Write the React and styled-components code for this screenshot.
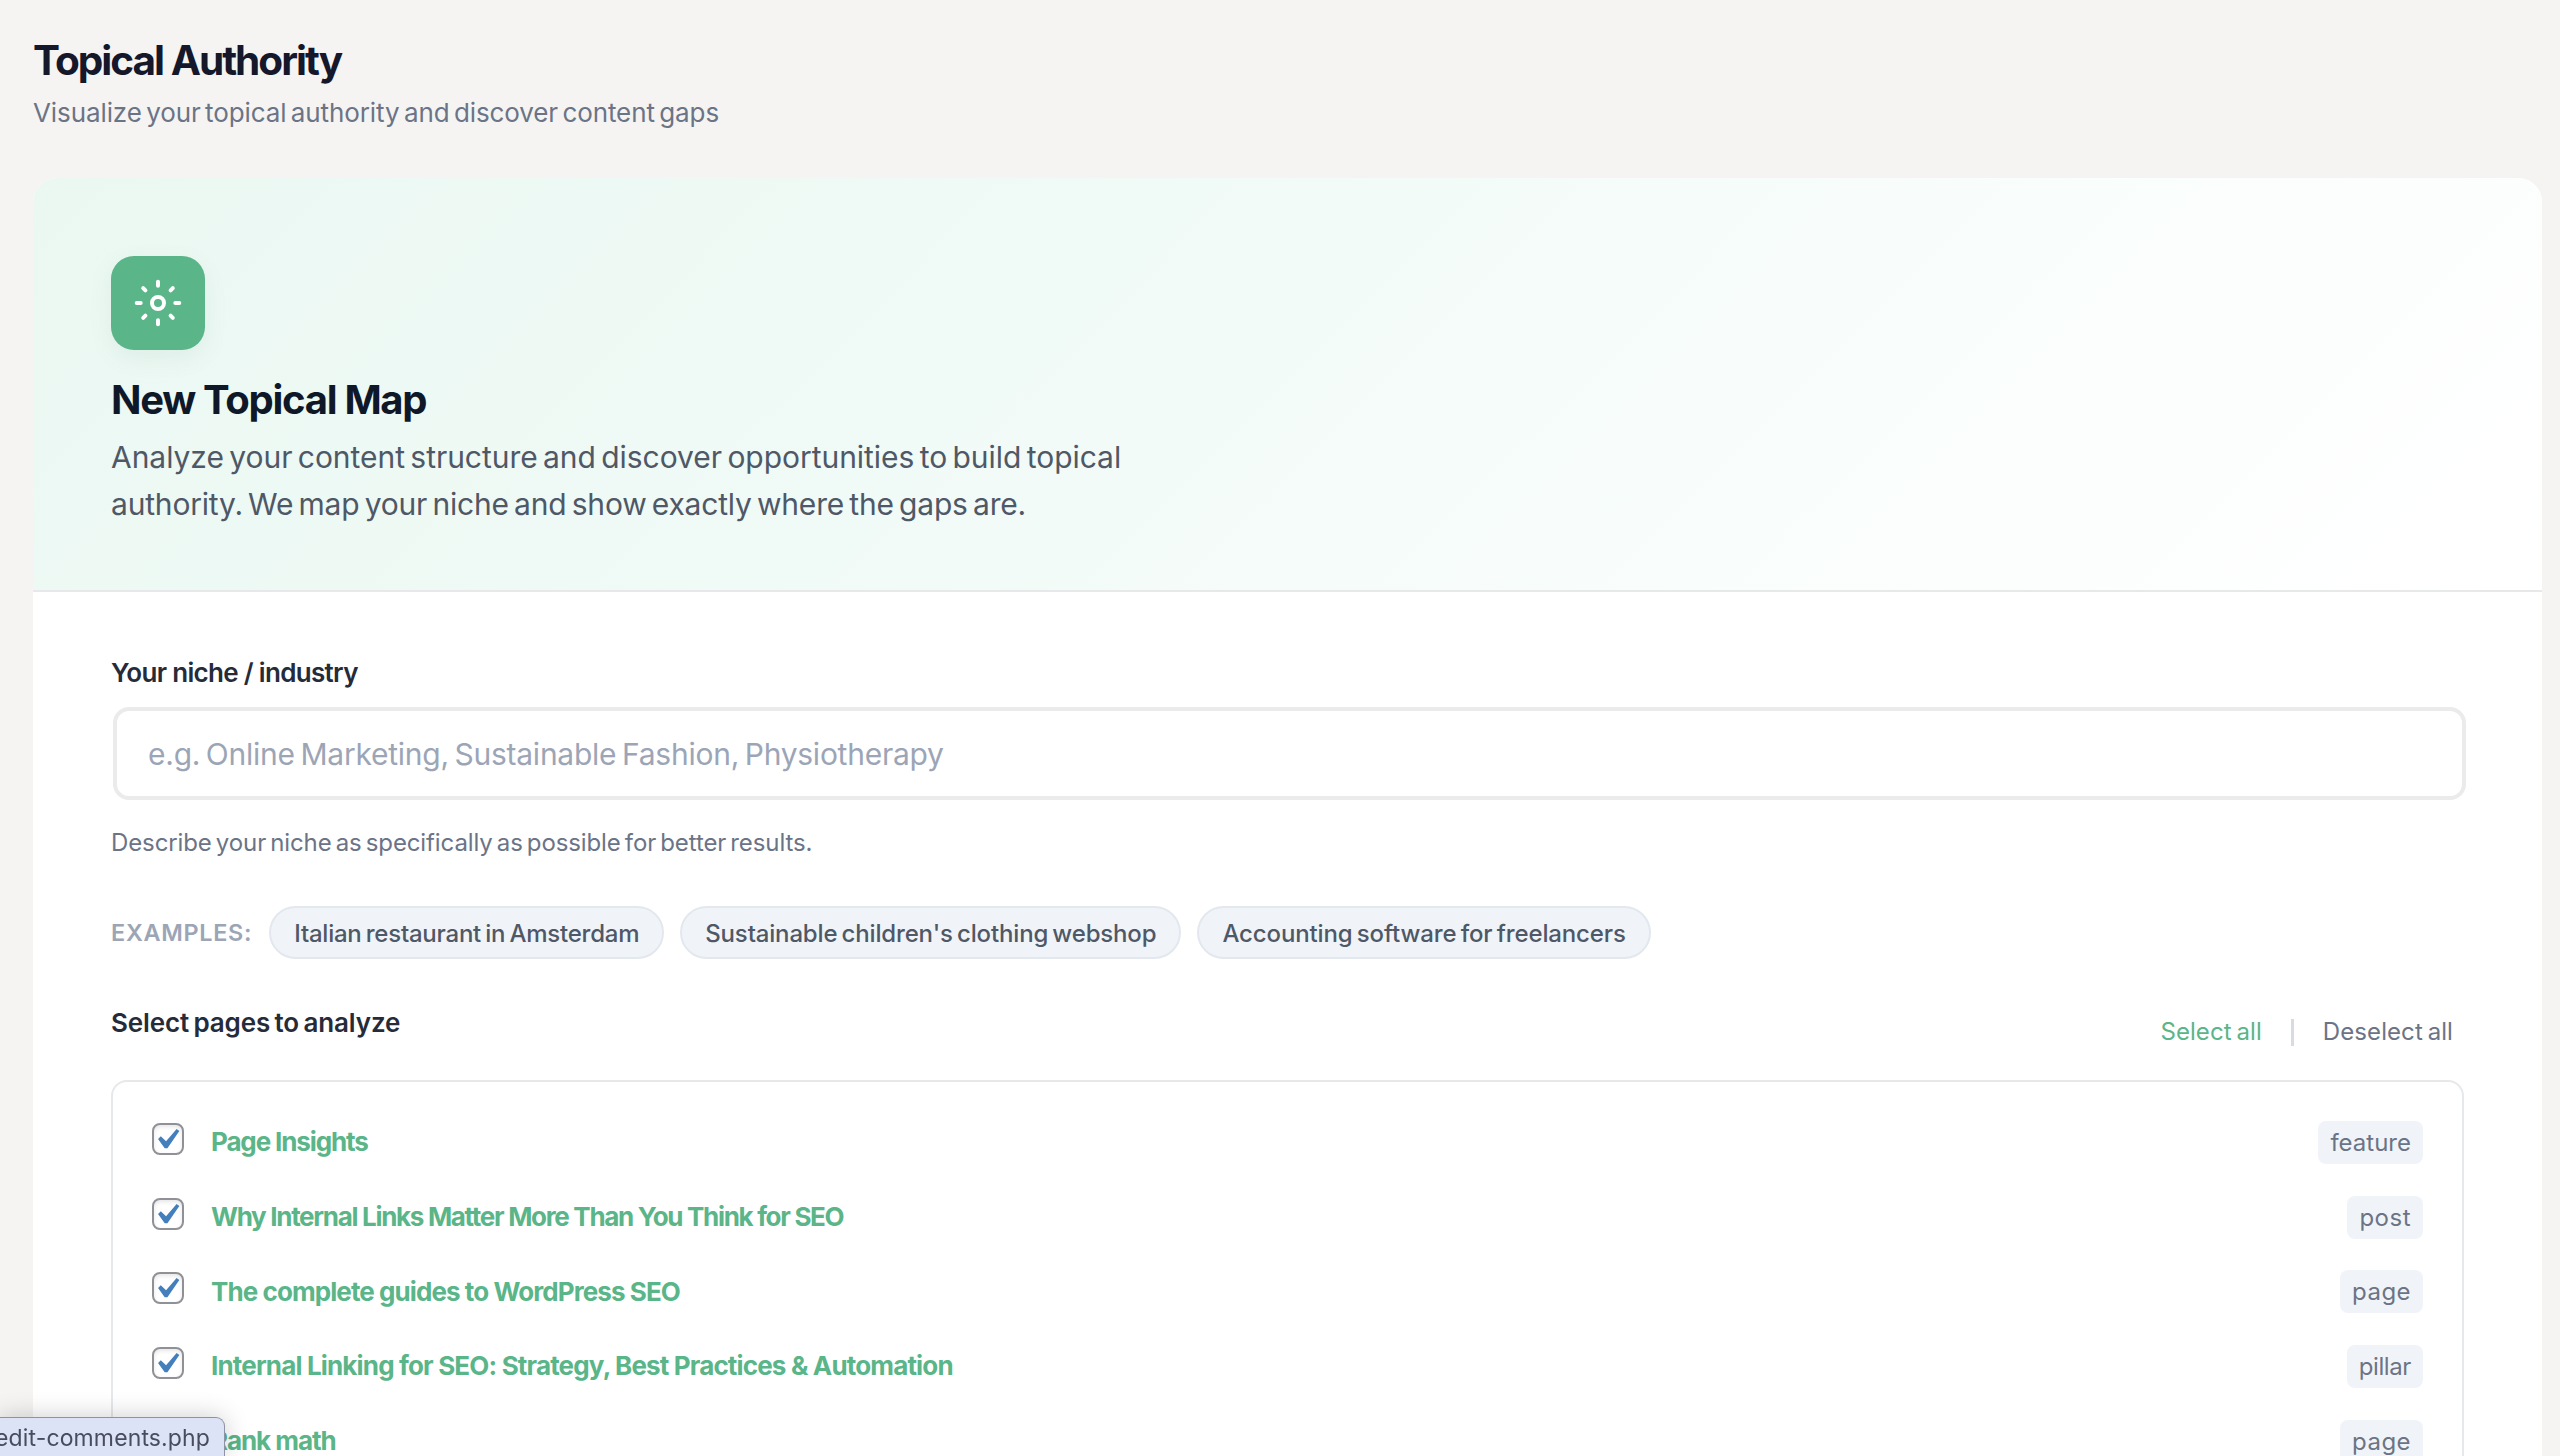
import React, {useState} from 'react'
import styled, {createGlobalStyle, css} from 'styled-components'

const color = {
    background: '#f5f4f2',
    white: '#ffffff',
    green: '#5ab588',
    heading: '#15172a',
    dark: '#262b3a',
    text: '#4f5866',
    secondary: '#6b7486',
    light: '#9ca5b6',
    border: '#e6e8ea',
    chip: '#f0f4f9',
}

const GlobalStyle = createGlobalStyle`
    * {
        box-sizing: border-box;
    }
    body {
        margin: 0;
        background: ${color.background};
        font-family: Inter, "Liberation Sans", sans-serif;
    }
`;

// 글자 간격은 문구마다 조금씩 다르다
const spacing = css`
    letter-spacing: ${props => props.$ls || 0}px;
    word-spacing: ${props => props.$ws === undefined ? -2 : props.$ws}px;
    white-space: nowrap;
`;

const Page = styled.div`
    height: 1456px;
    padding: 36px 18px 0 33px;
    overflow: hidden;
`;
const PageTitle = styled.h1`
    margin: 0;
    font-size: 40.5px;
    line-height: 49px;
    font-weight: 700;
    color: ${color.heading};
    ${spacing}
`;
const PageDesc = styled.p`
    margin: 12px 0 49px;
    font-size: 26px;
    line-height: 32px;
    color: ${color.secondary};
    ${spacing}
`;

const Card = styled.div`
    background: ${color.white};
    border-radius: 24px 24px 0 0;
    overflow: hidden;
`;
const Hero = styled.div`
    padding: 78px 78px 62px;
    border-bottom: 2px solid ${color.border};
    background: linear-gradient(135deg, #ebf8f2 0%, #f0faf6 38%, #f8fdfb 66%, #ffffff 98%);
`;
const HeroIcon = styled.div`
    display: flex;
    align-items: center;
    justify-content: center;
    width: 94px;
    height: 94px;
    border-radius: 23px;
    background: ${color.green};
    box-shadow: 0 8px 24px rgba(60, 120, 100, 0.08);
`;
const HeroTitle = styled.h2`
    margin: 24px 0 9px;
    font-size: 40px;
    line-height: 51px;
    font-weight: 700;
    color: #0f1828;
    ${spacing}
`;
const HeroText = styled.div`
    font-size: 30px;
    line-height: 47px;
    color: ${color.text};
    ${spacing}
`;

const Body = styled.div`
    padding: 64px 78px 0;
`;
const Label = styled.div`
    font-size: 26px;
    line-height: 34px;
    font-weight: 600;
    color: ${color.dark};
    ${spacing}
`;
const Input = styled.input`
    display: block;
    width: 100%;
    height: 93px;
    margin: 17px 0 0 2px;
    padding: 0 31px;
    border: 4px solid #ebebeb;
    border-radius: 16px;
    outline: none;
    background: ${color.white};
    font-family: inherit;
    font-size: 30px;
    color: ${color.dark};
    ${spacing}

    &::placeholder {
        color: ${color.light};
        opacity: 1;
    }
`;
const Hint = styled.div`
    margin: 28px 0 49px;
    font-size: 24px;
    line-height: 29px;
    color: ${color.secondary};
    ${spacing}
`;

const Examples = styled.div`
    display: flex;
    align-items: center;
    gap: 16px;
`;
const ExamplesLabel = styled.span`
    padding-right: 1px;
    font-size: 23.4px;
    font-weight: 600;
    color: ${color.light};
    ${spacing}
`;
const Chip = styled.button`
    height: 53px;
    padding: 1px 23px 0;
    border: 2px solid #e3e8ee;
    border-radius: 27px;
    background: ${color.chip};
    font-family: inherit;
    font-size: 24px;
    font-weight: 500;
    color: ${color.text};
    cursor: pointer;
    ${spacing}
`;

const ListHeader = styled.div`
    display: flex;
    justify-content: space-between;
    align-items: flex-start;
    height: 74px;
    margin-top: 47px;
`;
const Actions = styled.div`
    display: flex;
    align-items: center;
    gap: 29px;
    padding: 11px 11px 0 0;
`;
const TextButton = styled.button`
    padding: 0;
    border: 0;
    background: none;
    font-family: inherit;
    font-size: 24px;
    line-height: 30px;
    color: ${props => props.$primary ? color.green : color.secondary};
    cursor: pointer;
    ${spacing}
`;
const Divider = styled.span`
    width: 3px;
    height: 27px;
    background: #d8dce2;
`;

const List = styled.div`
    height: 480px;
    padding: 23px 39px;
    border: 2px solid ${color.border};
    border-radius: 16px;
`;
const Item = styled.div`
    display: flex;
    align-items: center;
    height: 74.7px;
`;
const Check = styled.button`
    display: flex;
    width: 32px;
    height: 32px;
    margin: 0 27px 7px 0;
    padding: 0;
    border: 2px solid #8f9196;
    border-radius: 8px;
    background: ${color.white};
    box-shadow: inset 0 2px 4px rgba(0, 0, 0, 0.1);
`;
const ItemTitle = styled.span`
    flex: 1;
    font-size: 26px;
    line-height: 34px;
    font-weight: 700;
    color: ${color.green};
    ${spacing}
`;
const Badge = styled.span`
    height: 43px;
    padding: 1px 12px 0;
    border-radius: 8px;
    background: #f0f4f8;
    font-size: 24px;
    line-height: 42px;
    color: ${color.secondary};
    ${spacing}
`;

// 브라우저 왼쪽 아래 링크 주소 표시
const StatusBar = styled.div`
    position: fixed;
    left: 0;
    bottom: 0;
    display: flex;
    justify-content: flex-end;
    width: 225px;
    height: 39px;
    padding-right: 14px;
    border: 1px solid #8e93a3;
    border-width: 1px 1px 0 0;
    border-radius: 0 9px 0 0;
    background: #dce3f6;
    box-shadow: 0 0 26px rgba(0, 0, 0, 0.2);
    overflow: hidden;
    font-size: 23px;
    line-height: 40px;
    color: #474d5e;
    ${spacing}
`;

const examples = [
    {text: 'Italian restaurant in Amsterdam', ls: -0.23},
    {text: "Sustainable children's clothing webshop", ls: -0.16},
    {text: 'Accounting software for freelancers', ls: -0.13},
]

const pages = [
    {title: 'Page Insights', ls: -1.12, type: 'feature', typeLs: 0},
    {title: 'Why Internal Links Matter More Than You Think for SEO', ls: -1.31, type: 'post', typeLs: 0.5},
    {title: 'The complete guides to WordPress SEO', ls: -0.92, type: 'page', typeLs: 0.45},
    {title: 'Internal Linking for SEO: Strategy, Best Practices & Automation', ls: -0.84, type: 'pillar', typeLs: -0.4},
    {title: 'Rank math', ls: -1.05, type: 'page', typeLs: 0.45},
]

const SunIcon = () => (
    <svg width="48" height="48" viewBox="-24 -24 48 48" fill="none" stroke="#fff" strokeWidth="4" strokeLinecap="round">
        <circle r="6"/>
        <path d="M0 -21.3V-17.3M0 17.3V21.3M-21.3 0H-17.3M17.3 0H21.3"/>
        <path d="M12.6 -12.6L14.8 -14.8M12.6 12.6L14.8 14.8M-12.6 12.6L-14.8 14.8M-12.6 -12.6L-14.8 -14.8"/>
    </svg>
)

const CheckIcon = () => (
    <svg width="28" height="28" viewBox="3.8 2.88 13.66 13.66">
        <path fill="#447fbd" d="M14.83 4.89l1.34.94-5.81 8.38H9.02L5.78 9.67l1.34-1.25 2.57 2.4z"/>
    </svg>
)

export default () => {
    const [niche, setNiche] = useState('')
    const [checked, setChecked] = useState(pages.map(() => true))

    const toggle = (index) => setChecked(checked.map((c, i) => i === index ? !c : c))

    return (
        <>
            <GlobalStyle/>
            <Page>
                <PageTitle $ls={-1.98} $ws={0}>Topical Authority</PageTitle>
                <PageDesc $ls={-0.1} $ws={-2.8}>Visualize your topical authority and discover content gaps</PageDesc>

                <Card>
                    <Hero>
                        <HeroIcon><SunIcon/></HeroIcon>
                        <HeroTitle $ls={-1.29} $ws={0}>New Topical Map</HeroTitle>
                        <HeroText $ls={-0.04} $ws={-3}>Analyze your content structure and discover opportunities to build topical</HeroText>
                        <HeroText $ls={-0.19} $ws={-3}>authority. We map your niche and show exactly where the gaps are.</HeroText>
                    </Hero>

                    <Body>
                        <Label $ls={-0.68} $ws={0}>Your niche / industry</Label>
                        <Input
                            $ls={-0.25}
                            $ws={-2.5}
                            value={niche}
                            onChange={(e) => setNiche(e.target.value)}
                            placeholder="e.g. Online Marketing, Sustainable Fashion, Physiotherapy"
                        />
                        <Hint $ls={-0.11} $ws={-2.5}>Describe your niche as specifically as possible for better results.</Hint>

                        <Examples>
                            <ExamplesLabel $ls={0.72}>EXAMPLES:</ExamplesLabel>
                            {
                                examples.map(({text, ls}) =>
                                    <Chip key={text} $ls={ls} onClick={() => setNiche(text)}>{text}</Chip>
                                )
                            }
                        </Examples>

                        <ListHeader>
                            <Label $ls={-0.13}>Select pages to analyze</Label>
                            <Actions>
                                <TextButton $primary $ls={0.08} onClick={() => setChecked(pages.map(() => true))}>Select all</TextButton>
                                <Divider/>
                                <TextButton $ls={0.08} onClick={() => setChecked(pages.map(() => false))}>Deselect all</TextButton>
                            </Actions>
                        </ListHeader>

                        <List>
                            {
                                pages.map(({title, ls, type, typeLs}, index) =>
                                    <Item key={title}>
                                        <Check role="checkbox" aria-checked={checked[index]} onClick={() => toggle(index)}>
                                            {checked[index] && <CheckIcon/>}
                                        </Check>
                                        <ItemTitle $ls={ls} $ws={0}>{title}</ItemTitle>
                                        <Badge $ls={typeLs}>{type}</Badge>
                                    </Item>
                                )
                            }
                        </List>
                    </Body>
                </Card>
            </Page>
            <StatusBar $ls={0.13}>edit-comments.php</StatusBar>
        </>
    )
}
